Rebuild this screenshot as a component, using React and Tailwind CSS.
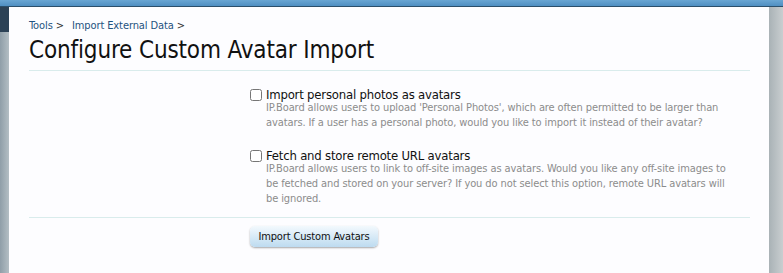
export default function App() {
  const body = { fontFamily: '"DejaVu Sans Condensed", "DejaVu Sans", Verdana, sans-serif' };

  return (
    <div className="flex h-[273px] w-[783px] flex-col overflow-hidden bg-white" style={body}>
      <div className="h-[6px] shrink-0 bg-gradient-to-b from-[#6aa6d3] to-[#4f8fc2]" />
      <div className="h-px shrink-0 bg-[#2b4f6b]" />
      <div className="flex min-h-0 flex-1">
        <div className="flex w-[9px] shrink-0 flex-col">
          <div className="h-[25px] bg-[#2c4256]" />
          <div className="flex-1 bg-gradient-to-r from-[#8f9ea8] to-[#b3bec4]" />
        </div>

        <main className="flex-1 bg-[#fdfdff] pl-[20px] pr-[19px]">
          <nav className="mt-[12px] flex gap-[8px] text-[11px] leading-[14px] tracking-[-0.1px] text-[#1f5380]">
            <span>Tools <span className="text-[#333]">&gt;</span></span>
            <span>Import External Data <span className="text-[#333]">&gt;</span></span>
          </nav>
          <h1 className="mt-[2px] text-[24px] leading-[30px] tracking-[-0.15px] text-[#111]">Configure Custom Avatar Import</h1>
          <div className="mt-[5px] h-px bg-[#d9ecec]" />

          <div className="pl-[221px] pt-[18px]">
            <Option
              title="Import personal photos as avatars"
              text="IP.Board allows users to upload 'Personal Photos', which are often permitted to be larger than avatars. If a user has a personal photo, would you like to import it instead of their avatar?"
            />
            <div className="h-[20px]" />
            <Option
              title="Fetch and store remote URL avatars"
              text="IP.Board allows users to link to off-site images as avatars. Would you like any off-site images to be fetched and stored on your server? If you do not select this option, remote URL avatars will be ignored."
            />
          </div>

          <div className="mt-[11px] h-px bg-[#d9ecec]" />
          <div className="pl-[221px] pt-[5px]">
            <button className="h-[21px] w-[128px] rounded-[5px] bg-gradient-to-b from-[#f3f9fd] to-[#bddbf0] text-[11px] leading-[21px] tracking-[-0.15px] text-[#111] shadow-[0_1px_2px_rgba(0,0,0,0.35)]">
              Import Custom Avatars
            </button>
          </div>
        </main>

        <div className="w-[14px] shrink-0 bg-gradient-to-r from-[#a9b2b6] to-[#c9ced0]" />
      </div>
    </div>
  );
}

function Option({ title, text }) {
  return (
    <div className="flex gap-[4px]">
      <input type="checkbox" className="h-[12px] w-[12px] shrink-0" />
      <div className="w-[460px]">
        <div className="text-[13px] leading-[12px] tracking-[-0.2px] text-[#111]">{title}</div>
        <p className="-mt-[1px] text-[11px] leading-[15px] tracking-[-0.1px] text-[#8c8c8c]">{text}</p>
      </div>
    </div>
  );
}
